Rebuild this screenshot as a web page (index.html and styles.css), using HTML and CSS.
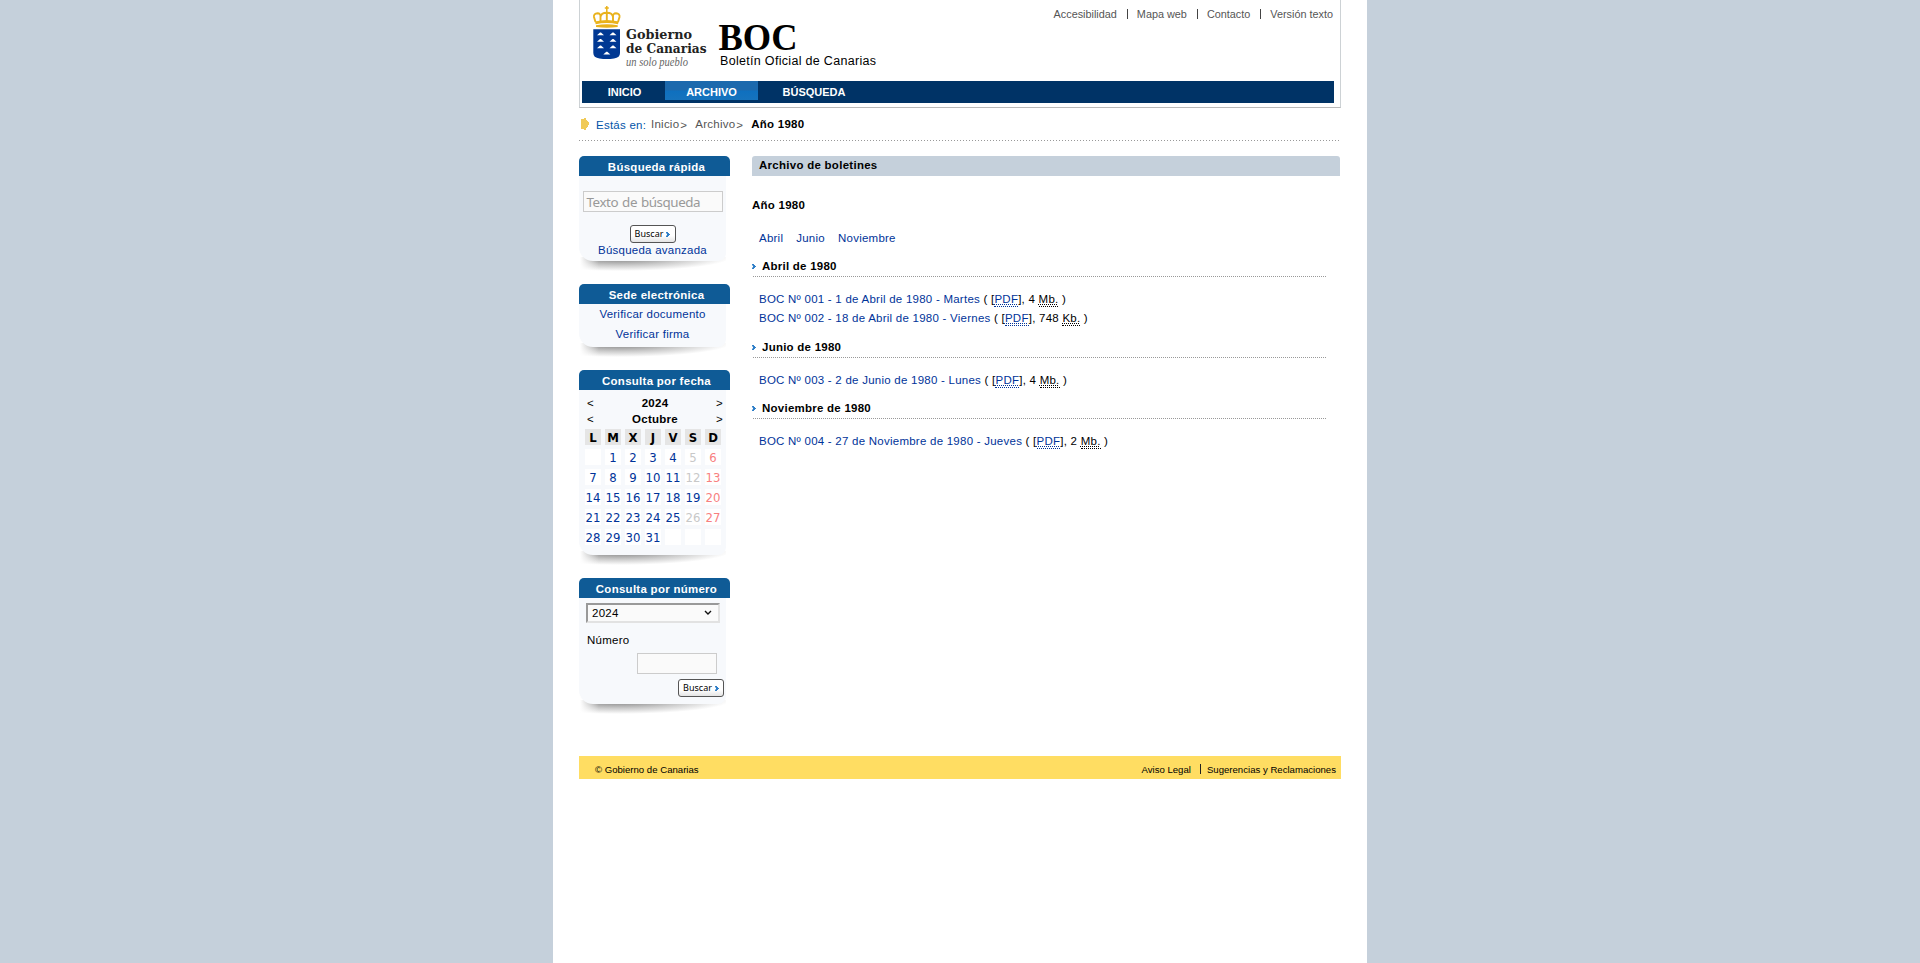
FILE: index.html
```html
<!DOCTYPE html>
<html lang="es">
<head>
<meta charset="utf-8">
<title>BOC - Archivo de boletines. Año 1980</title>
<link rel="stylesheet" href="styles.css">
</head>
<body>
<svg class="defs" width="0" height="0">
  <symbol id="arrow" viewBox="0 0 4 5"><path d="M0 0h2v1h1v1h1v1h-1v1h-1v1h-2v-1.500h1v-2h-1z" fill="#2f7fc8"/></symbol>
</svg>
<div class="page">
  <header class="header">
    <div class="brand">
      <svg class="logo" width="300" height="78" viewBox="0 0 300 78">
        <g fill="none" stroke="#e9b21c" stroke-width="1.900">
          <path d="M26.800 6v6M24.800 8h4" stroke-width="1.500"/>
          <path d="M15.500 22L14 17Q13.500 13.500 17.500 13.300Q20.800 13.300 20.500 17V22M20.500 17Q21 12.700 26.800 12.700Q32.500 12.700 33 17V22M26.800 12V22M33 17Q32.700 13.300 36 13.300Q40 13.500 39.500 17L38 22"/>
        </g>
        <path d="M15 21.500Q26.800 18.500 38.700 21.500L38 24.200Q26.800 22 15.700 24.200zM16 25.200Q26.800 23.200 37.700 25.200V27Q26.800 28.500 16 27z" fill="#e9b21c"/>
        <path d="M13.300 29.200H40V53Q40 57.500 34 58.500Q26.800 59.500 19.500 58.500Q13.300 57.500 13.300 53z" fill="#003893"/>
        <path d="M17 35.200l3-2.700h1l3 2.700zM29.500 35.200l3-2.700h1l3 2.700zM17 41.700l3-2.700h1l3 2.700zM29.500 41.700l3-2.700h1l3 2.700zM17 48.200l3-2.700h1l3 2.700zM29.500 48.200l3-2.700h1l3 2.700zM23.300 54.500l3-2.700h1l3 2.700z" fill="#fff"/>
        <g class="gov">
          <text x="46" y="38.500" textLength="66" lengthAdjust="spacingAndGlyphs">Gobierno</text>
          <text x="46" y="52.500" textLength="80.500" lengthAdjust="spacingAndGlyphs">de Canarias</text>
        </g>
        <text class="motto" x="46" y="65.500" textLength="62" lengthAdjust="spacingAndGlyphs">un solo pueblo</text>
        <text class="boc" x="138.500" y="50" textLength="79" lengthAdjust="spacingAndGlyphs">BOC</text>
        <text class="sub" x="140" y="65" textLength="156">Boletín Oficial de Canarias</text>
      </svg>
      <ul class="toplinks"><li>Accesibilidad</li><li>Mapa web</li><li>Contacto</li><li>Versión texto</li></ul>
    </div>
    <nav class="nav"><a class="n1">INICIO</a><a class="n2">ARCHIVO</a><a class="n3">BÚSQUEDA</a></nav>
  </header>
  <div class="crumbs">
    <svg class="here" width="8" height="12" viewBox="0 0 8 12"><path d="M0 1h3V0h2v2h1v1h1v1h1v3H7v2H6v1H5v2H3v-1H0z" fill="#f0ca58"/></svg>
    <span class="where">Estás en:</span><span class="step">Inicio<i>&gt;</i></span><span class="step">Archivo<i>&gt;</i></span><b>Año 1980</b>
  </div>
  <div class="columns">
    <aside class="side">
      <section class="box search">
        <h2>Búsqueda rápida</h2>
        <div class="body">
          <div class="field">Texto de búsqueda</div>
          <div class="btn">Buscar<svg width="4" height="5"><use href="#arrow"/></svg></div>
          <a>Búsqueda avanzada</a>
        </div>
        <div class="shade"></div>
      </section>
      <section class="box sede">
        <h2>Sede electrónica</h2>
        <div class="body"><a>Verificar documento</a><a>Verificar firma</a></div>
        <div class="shade"></div>
      </section>
      <section class="box date">
        <h2>Consulta por fecha</h2>
        <div class="body">
          <div class="sel"><span>&lt;</span><b>2024</b><span>&gt;</span></div>
          <div class="sel"><span>&lt;</span><b>Octubre</b><span>&gt;</span></div>
          <div class="cal">
            <b>L</b><b>M</b><b>X</b><b>J</b><b>V</b><b>S</b><b>D</b>
            <i></i><i>1</i><i>2</i><i>3</i><i>4</i><i class="off">5</i><i class="sun">6</i>
            <i>7</i><i>8</i><i>9</i><i>10</i><i>11</i><i class="off">12</i><i class="sun">13</i>
            <i>14</i><i>15</i><i>16</i><i>17</i><i>18</i><i>19</i><i class="sun">20</i>
            <i>21</i><i>22</i><i>23</i><i>24</i><i>25</i><i class="off">26</i><i class="sun">27</i>
            <i>28</i><i>29</i><i>30</i><i>31</i><i></i><i></i><i></i>
          </div>
        </div>
        <div class="shade"></div>
      </section>
      <section class="box number">
        <h2>Consulta por número</h2>
        <div class="body">
          <div class="select">2024<svg width="8" height="6" viewBox="0 0 8 6"><path d="M1 1l3 3 3-3" fill="none" stroke="#111" stroke-width="1.400"/></svg></div>
          <label>Número</label>
          <div class="num"></div>
          <div class="btn">Buscar<svg width="4" height="5"><use href="#arrow"/></svg></div>
        </div>
        <div class="shade"></div>
      </section>
    </aside>
    <main class="main">
      <h1>Archivo de boletines</h1>
      <h3>Año 1980</h3>
      <div class="months"><a>Abril</a><a>Junio</a><a>Noviembre</a></div>
      <h4><svg width="4" height="5"><use href="#arrow"/></svg>Abril de 1980</h4>
      <ul class="list">
        <li><a>BOC Nº 001 - 1 de Abril de 1980 - Martes</a> ( [<a><abbr>PDF</abbr></a>], 4 <abbr>Mb.</abbr> )</li>
        <li><a>BOC Nº 002 - 18 de Abril de 1980 - Viernes</a> ( [<a><abbr>PDF</abbr></a>], 748 <abbr>Kb.</abbr> )</li>
      </ul>
      <h4><svg width="4" height="5"><use href="#arrow"/></svg>Junio de 1980</h4>
      <ul class="list">
        <li><a>BOC Nº 003 - 2 de Junio de 1980 - Lunes</a> ( [<a><abbr>PDF</abbr></a>], 4 <abbr>Mb.</abbr> )</li>
      </ul>
      <h4><svg width="4" height="5"><use href="#arrow"/></svg>Noviembre de 1980</h4>
      <ul class="list">
        <li><a>BOC Nº 004 - 27 de Noviembre de 1980 - Jueves</a> ( [<a><abbr>PDF</abbr></a>], 2 <abbr>Mb.</abbr> )</li>
      </ul>
    </main>
  </div>
  <footer class="footer"><span>© Gobierno de Canarias</span><span class="legal">Aviso Legal</span><span class="sug">Sugerencias y Reclamaciones</span></footer>
</div>
</body>
</html>
```
FILE: styles.css
```css
* { box-sizing: border-box; margin: 0; padding: 0; }
body { background: #c5d0db; font: 11.490px/16px "Liberation Sans", Arial, sans-serif; letter-spacing: .25px; color: #000; }
ul { list-style: none; }
i { font-style: normal; }
svg { display: block; flex: none; }
.defs { position: absolute; }
a { color: #039; }
.page { width: 814px; height: 963px; margin: 0 auto; padding: 0 26px; background: #fff; overflow: hidden; }
.header { width: 762px; height: 108px; border: 1px solid #cdd2d5; border-top: 0; border-bottom: 1px solid #b9b9b9; padding: 0 6px 0 2px; letter-spacing: 0; }
.brand { display: flex; justify-content: space-between; height: 81px; }
.logo { margin-left: -2px; }
.gov { font: bold 12px "DejaVu Serif", serif; fill: #222; }
.motto { font: italic 11.500px "Liberation Serif", serif; fill: #666; }
.boc { font: bold 37px "Liberation Serif", serif; }
.sub { font: 12.500px "Liberation Sans", sans-serif; }
.toplinks { display: flex; padding: 6px 1px 0 0; font-size: 10.850px; color: #555; }
.toplinks li { height: 16px; }
.toplinks li + li { background: linear-gradient(#444, #444) 10px 3px / 1px 10px no-repeat; padding-left: 20px; }
.nav { display: flex; height: 22px; background: #036; }
.nav a { color: #fff; font-weight: bold; font-size: 11px; line-height: 22px; text-align: center; }
.n1 { width: 83px; padding-left: 2px; }
.n2 { width: 93px; height: 19px; background: linear-gradient(#1c69ad, #1c69ad 45%, #0f70bf 55%, #1673bd); }
.n3 { width: 111px; padding-left: 1px; }
.crumbs { display: flex; height: 33px; padding: 8px 0 0 2px; background: repeating-linear-gradient(90deg, #999 0 1px, transparent 1px 3px) 0 32px / 100% 1px no-repeat; color: #555; }
.here { margin: 2px 7px 0 0; }
.where { color: #0054a8; padding-top: 1px; width: 55px; }
.step i { margin-left: 1px; position: relative; top: 1px; }
.step { margin-right: 8px; }
.crumbs b { color: #000; }
.columns { display: flex; height: 615px; padding-top: 15px; }
.side { width: 173px; }
.box { width: 151px; }
.box h2 { height: 20px; background: #0f5b96; border-radius: 5px 5px 0 0; color: #fff; font: bold 11.450px/22px "Liberation Sans", sans-serif; letter-spacing: .3px; text-align: center; padding-left: 4px; }
.body { position: relative; z-index: 1; width: 147px; background: #f7f9fc; display: flex; flex-direction: column; border-radius: 0 0 8px 14px; }
.shade { width: 147px; height: 14px; margin-top: -4px; background: linear-gradient(90deg, #fff 1px, #fff0 20px), radial-gradient(ellipse 112px 14px at 40px 0, #999 25%, #ccc 60%, transparent); }
.search .body { height: 85px; align-items: center; padding-top: 15px; }
.field { width: 140px; height: 21px; border: 1px solid #ccc; background: #fafafa; color: #999; font: 13.400px/21px "Noto Sans", sans-serif; padding-left: 3px; letter-spacing: -.45px; word-spacing: 1px; }
.btn { width: 46px; height: 18px; border: 1px solid #555; border-radius: 3px; background: linear-gradient(#fff 60%, #e4e4e4); font: 9px/16px "Noto Sans", sans-serif; display: flex; align-items: center; justify-content: center; gap: 3px; letter-spacing: 0; }
.search .btn { margin: 13px 0 0; }
.search .body a { margin-top: -1px; }
.search { height: 128px; }
.sede { height: 86px; }
.sede .body { height: 43px; align-items: center; line-height: 20px; }
.date { height: 208px; }
.date .body { height: 165px; padding: 5px 0 0 6px; }
.sel { display: flex; justify-content: space-between; height: 16px; width: 139px; padding: 0 1px 0 2px; }
.cal { display: grid; grid-template-columns: repeat(7, 16px); gap: 4px; margin-top: 2px; font: 13px/17px "DejaVu Sans Condensed", "DejaVu Sans", sans-serif; letter-spacing: 0; }
.cal b, .cal i { height: 16px; display: flex; justify-content: center; }
.cal b { background: #e5e5e5; }
.cal i { background: #fff; color: #039; }
.cal .off { color: #c8c8c8; }
.cal .sun { color: #f88080; }
.number .body { height: 106px; padding: 5px 0 0 7px; }
.select { width: 134px; height: 20px; border: 2px solid; border-color: #999 #e2e2e2 #e2e2e2 #999; background: #fafafa; display: flex; align-items: center; justify-content: space-between; padding: 0 6px 0 4px; }
.number label { margin: 9px 0 1px 1px; }
.num { width: 80px; height: 21px; margin: 4px 0 0 51px; border: 1px solid #ccc; background: #fafafa; }
.number .btn { margin: 5px 0 0 92px; }
.main { width: 588px; }
.main h1 { height: 20px; background: #c5d0db; border-radius: 3px 3px 0 0; font: bold 11.450px/19px "Liberation Sans", sans-serif; letter-spacing: .3px; padding-left: 7px; }
.main h3 { font-size: 11.490px; margin-top: 21px; height: 16px; }
.months { display: flex; gap: 13px; padding: 17px 0 11px 7px; }
.main h4 { display: flex; align-items: center; gap: 6px; width: 575px; height: 20px; padding-bottom: 2px; font-size: 11.490px; background: repeating-linear-gradient(90deg, #999 0 1px, transparent 1px 2px) 1px 19px / 100% 1px no-repeat; }
.list { padding: 13px 0 9px 7px; }
.list li { height: 19px; line-height: 18px; }
.list li:nth-child(2) { height: 20px; }
abbr { padding-bottom: 1px; border-bottom: 1px dotted currentColor; text-decoration: underline dotted 1px; text-underline-offset: 1px; }
.footer { display: flex; width: 762px; height: 23px; background: #ffdd62; padding: 0 5px 0 16px; font-size: 9.600px; letter-spacing: 0; line-height: 27px; }
.legal { margin-left: auto; padding-right: 9px; }
.sug { background: linear-gradient(#222, #222) 0 8px / 1px 10px no-repeat; padding-left: 7px; }
```
